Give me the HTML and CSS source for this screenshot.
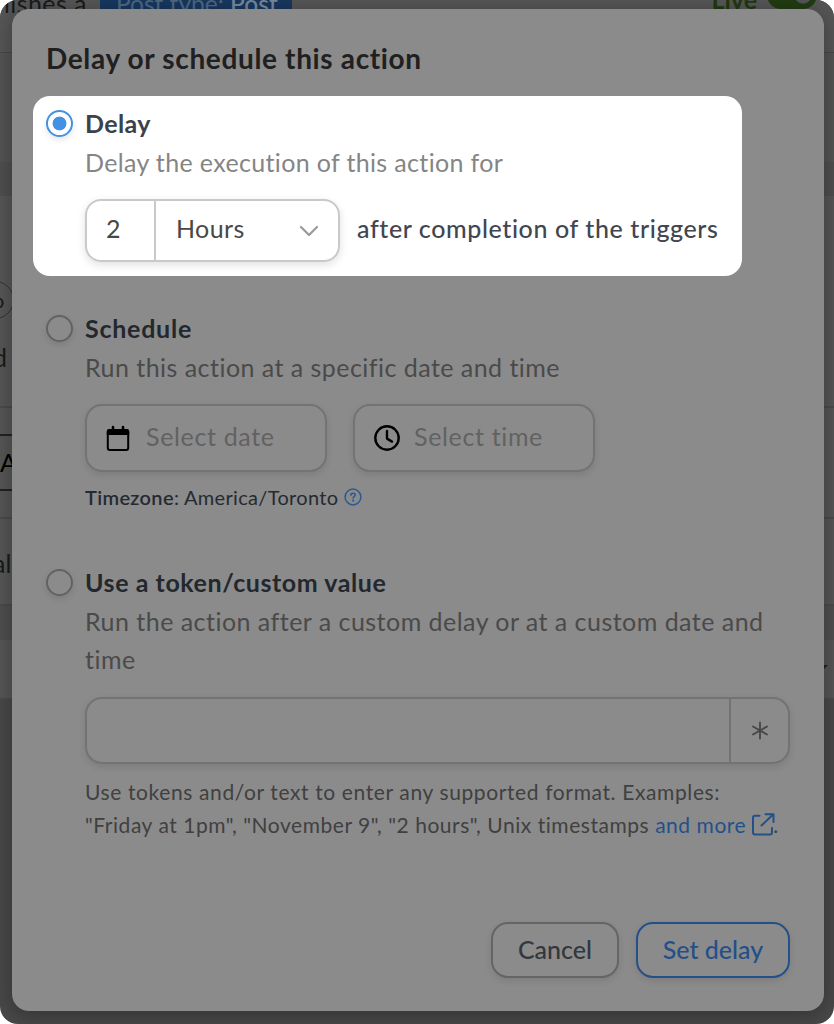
FILE: index.html
```html
<!DOCTYPE html>
<html lang="en">
<head>
  <meta charset="UTF-8">
  <meta name="viewport" content="width=device-width, initial-scale=1.0">
  <title>Delay or schedule this action</title>
  <link rel="stylesheet" href="styles.css">
</head>
<body>
  <div class="page">
    <!-- recipe editor behind the modal -->
    <div class="editor">
      <div class="editor-header">
        <span class="sentence">lishes a</span>
        <span class="token">Post type: <b>Post</b></span>
        <span class="live">Live</span>
        <span class="toggle"></span>
      </div>
      <div class="editor-gap"></div>
      <div class="editor-band"></div>
      <div class="editor-block trigger">
        <span class="pill">o</span>
        <span class="word">d</span>
      </div>
      <div class="editor-block add"><span class="add-button">A</span></div>
      <div class="editor-block label"><span class="word">al</span></div>
      <div class="editor-band"></div>
      <div class="editor-block last"><span class="caret"></span></div>
    </div>

    <div class="modal">
      <h1>Delay or schedule this action</h1>

      <section class="option spotlight">
        <span class="radio checked"></span>
        <div class="option-body">
          <h2 class="t-delay">Delay</h2>
          <p class="t-delay-desc">Delay the execution of this action for</p>
          <div class="delay-row">
            <div class="delay-input">
              <span class="number">2</span>
              <span class="unit"><span>Hours</span>
                <svg width="20" height="12" viewBox="0 0 20 12"><path d="M2 2l8 8 8-8" fill="none" stroke="#999" stroke-width="2.2" stroke-linecap="round" stroke-linejoin="round"/></svg>
              </span>
            </div>
            <span class="after">after completion of the triggers</span>
          </div>
        </div>
      </section>

      <section class="option schedule">
        <span class="radio"></span>
        <div class="option-body">
          <h2 class="t-schedule">Schedule</h2>
          <p class="t-schedule-desc">Run this action at a specific date and time</p>
          <div class="fields">
            <div class="field">
              <svg width="24" height="27" viewBox="0 0 24 27"><path d="M7 2v4M17 2v4" stroke="#000" stroke-width="2.6" stroke-linecap="round"/><rect x="1.8" y="5" width="20.4" height="20" rx="2" fill="none" stroke="#000" stroke-width="2"/><path d="M.8 6.5Q.8 4 3 4h18q2.2 0 2.2 2.5V10H.8z"/></svg>
              <span>Select date</span>
            </div>
            <div class="field clock">
              <svg width="26" height="26" viewBox="0 0 26 26" fill="none" stroke="#000" stroke-width="2.4" stroke-linecap="round" stroke-linejoin="round"><circle cx="13" cy="13" r="11.7"/><path d="M13 6v7.6l5 3"/></svg>
              <span>Select time</span>
            </div>
          </div>
          <div class="timezone">
            <span><b>Timezone</b>: America/Toronto</span>
            <svg width="18" height="18" viewBox="0 0 18 18" fill="none" stroke="#2b5a92" stroke-linecap="round"><circle cx="9" cy="9" r="7.9" stroke-width="1.5"/><path d="M6.9 7.2c0-1.2.9-2 2.1-2s2.2.7 2.2 1.9c0 1.4-2.1 1.5-2.1 2.8" stroke-width="1.6"/><path d="M9.1 12.6v.1" stroke-width="2"/></svg>
          </div>
        </div>
      </section>

      <section class="option custom">
        <span class="radio"></span>
        <div class="option-body">
          <h2 class="t-custom">Use a token/custom value</h2>
          <p class="t-custom-desc">Run the action after a custom delay or at a custom date and<br>time</p>
          <div class="token-input">
            <span class="token-value"></span>
            <span class="token-button">
              <svg width="18" height="19" viewBox="0 0 18 19"><path d="M9 1.5v16M2 5.5l14 8M16 5.5l-14 8" stroke="#454545" stroke-width="1.8" stroke-linecap="round"/></svg>
            </span>
          </div>
          <div class="help">
            <span>Use tokens and/or text to enter any supported format. Examples:</span><br>
            <span class="examples">"Friday at 1pm", "November 9", "2 hours", Unix timestamps <a>and more</a></span><svg width="24" height="23" viewBox="0 0 24 23" fill="none" stroke="#24508a" stroke-width="2" stroke-linecap="round" stroke-linejoin="round"><path d="M8.5 2.7H4Q2 2.7 2 4.7V19.5Q2 21.5 4 21.5H19Q21 21.5 21 19.5V15M10.5 12.5L22 1.5M14.5 1.3H22.5V9"/></svg><span>.</span>
          </div>
        </div>
      </section>

      <div class="actions">
        <button class="cancel">Cancel</button>
        <button class="submit">Set delay</button>
      </div>
    </div>
  </div>
</body>
</html>
```

FILE: styles.css
```css
* {
  box-sizing: border-box;
}

body {
  margin: 0;
  background: #fff;
  font-family: Lato, "Liberation Sans", sans-serif;
  font-size: 25px;
}

h1, h2, p {
  margin: 0;
}

svg {
  flex: none;
}

.page {
  position: relative;
  height: 1024px;
  border-radius: 18px;
  overflow: hidden;
  background: #484848;
}

/* editor */
.editor {
  color: #1a1a1a;
}

.editor-header {
  display: flex;
  height: 53px;
  background: #555;
  border-bottom: 1px solid #474747;
  line-height: 28px;
}

.sentence {
  width: 100px;
  padding-left: 4px;
  margin-top: -11px;
  letter-spacing: 0.4px;
}

.token {
  width: 192px;
  height: 20px;
  padding-left: 16px;
  background: #17375d;
  color: #4e6680;
  font-size: 24.5px;
  line-height: 8px;
  white-space: nowrap;
}

.token b {
  color: #76889c;
  font-weight: 500;
}

.live {
  margin-left: auto;
  margin-top: -15px;
  padding-right: 10px;
  color: #20380f;
  font-weight: 700;
}

.toggle {
  width: 50px;
  height: 28px;
  margin: -19px 17px 0 0;
  border-radius: 14px;
  background: radial-gradient(circle at 36px 14px, #555 8px, #213b12 9px);
}

.editor-gap {
  height: 109px;
  background: #535353;
}

.editor-band {
  height: 34px;
  background: #4e4e4e;
}

.editor-block {
  background: #555;
  border-bottom: 2px solid #4a4a4a;
}

.trigger {
  height: 212px;
  padding-top: 85px;
}

.pill {
  display: block;
  width: 22px;
  height: 38px;
  margin-left: -8px;
  border: 1px solid #333;
  border-radius: 0 19px 19px 0;
  font-size: 20px;
  line-height: 36px;
}

.word {
  display: block;
  margin-left: -7px;
  line-height: 76px;
}

.add {
  height: 111px;
  padding-top: 26px;
}

.add-button {
  display: block;
  width: 300px;
  height: 57px;
  border: 2px solid #222;
  border-left: 0;
  color: #000;
  line-height: 52px;
}

.label {
  height: 87px;
  padding-top: 6px;
}

.last {
  height: 60px;
  padding-top: 25px;
}

.caret {
  display: block;
  width: 14px;
  height: 7px;
  margin-left: auto;
  margin-right: 6px;
  background: #222;
  clip-path: polygon(0 0, 100% 0, 50% 100%);
}

/* modal */
.modal {
  position: absolute;
  top: 9px;
  left: 12px;
  width: 812px;
  height: 1002px;
  padding: 29px 34px 0;
  border-radius: 17px;
  background: #8b8b8b;
  box-shadow: 0 4px 20px rgba(0, 0, 0, 0.3);
}

h1 {
  color: #202020;
  font-size: 28px;
  font-weight: 700;
  letter-spacing: 0.65px;
  line-height: 40px;
  white-space: nowrap;
}

.option {
  display: flex;
}

.option-body {
  flex: 1;
  white-space: nowrap;
}

.spotlight {
  width: 709px;
  height: 180px;
  margin: 18px 0 0 -13px;
  padding: 9px 0 0 13px;
  border-radius: 17px;
  background: #fff;
}

.schedule {
  margin-top: 34px;
}

.custom {
  margin-top: 52px;
}

.radio {
  width: 27px;
  height: 27px;
  margin: 5px 12px 0 0;
  border: 2px solid #626262;
  border-radius: 50%;
  box-shadow: 0 3px 6px rgba(0, 0, 0, 0.1);
}

.radio.checked {
  border-color: #4390e4;
  background: radial-gradient(circle, #4390e4 6.5px, #fff 7.3px);
}

h2 {
  color: #23272e;
  font-size: 25px;
  font-weight: 700;
  line-height: 36px;
  padding-bottom: 2px;
}

.t-delay {
  letter-spacing: 0.4px;
}

.t-schedule {
  letter-spacing: 0.75px;
}

.t-custom {
  letter-spacing: 0.57px;
}

p {
  color: #4a4a4a;
  line-height: 38px;
}

.t-delay-desc {
  letter-spacing: 0.35px;
}

.t-schedule-desc {
  letter-spacing: 0.46px;
}

.t-custom-desc {
  letter-spacing: 0.47px;
}

.spotlight h2 {
  color: #3b424b;
}

.spotlight p {
  color: #858585;
}

.delay-row {
  display: flex;
  align-items: center;
  gap: 17px;
  margin-top: 18px;
}

.delay-input {
  display: flex;
  width: 255px;
  height: 63px;
  border: 2px solid #c9c9c9;
  border-radius: 16px;
  box-shadow: 0 3px 8px rgba(0, 0, 0, 0.12);
  color: #484848;
  line-height: 55px;
}

.number {
  width: 69px;
  padding-left: 19px;
  border-right: 2px solid #c9c9c9;
}

.unit {
  display: flex;
  flex: 1;
  align-items: center;
  justify-content: space-between;
  padding: 0 19px 0 20px;
  letter-spacing: 0.4px;
}

.unit span {
  padding-bottom: 5px;
}

.after {
  color: #414650;
  font-weight: 500;
  letter-spacing: 0.6px;
  line-height: 57px;
  padding-bottom: 5px;
}

.fields {
  display: flex;
  gap: 26px;
  margin-top: 18px;
}

.field {
  display: flex;
  align-items: center;
  gap: 16px;
  width: 242px;
  height: 68px;
  padding-left: 19px;
  border: 2px solid #737373;
  border-radius: 17px;
  box-shadow: 0 3px 7px rgba(0, 0, 0, 0.1);
  color: #626262;
  letter-spacing: 0.65px;
}

.field.clock {
  gap: 14px;
}

.field span {
  padding-bottom: 4px;
}

.timezone {
  display: flex;
  align-items: center;
  gap: 6px;
  margin-top: 10px;
  color: #252a31;
  font-size: 20px;
  letter-spacing: 0.33px;
  line-height: 30px;
}

.timezone b {
  font-weight: 600;
}

.token-input {
  display: flex;
  width: 705px;
  height: 67px;
  margin-top: 19px;
  border: 2px solid #737373;
  border-radius: 17px;
  box-shadow: 0 3px 7px rgba(0, 0, 0, 0.1);
}

.token-value {
  flex: 1;
}

.token-button {
  display: flex;
  align-items: center;
  justify-content: center;
  width: 59px;
  border-left: 2px solid #737373;
}

.help {
  margin-top: 11px;
  color: #404040;
  font-size: 21px;
  letter-spacing: 0.62px;
  line-height: 33px;
}

.help .examples {
  letter-spacing: 0.54px;
}

.help a {
  color: #24508a;
}

.help svg {
  margin-left: 5px;
  vertical-align: -3px;
}

.help svg + span {
  margin-left: -2px;
}

.actions {
  display: flex;
  justify-content: flex-end;
  gap: 17px;
  margin-top: 81px;
}

button {
  height: 56px;
  padding: 0 0 2px;
  border: 2px solid #656565;
  border-radius: 17px;
  background: #8b8b8b;
  box-shadow: 0 3px 7px rgba(0, 0, 0, 0.1);
  font-family: inherit;
  font-size: 25px;
  font-weight: 500;
}

.cancel {
  width: 128px;
  color: #34373c;
}

.submit {
  width: 154px;
  border-color: #24508a;
  color: #24508a;
}
```
